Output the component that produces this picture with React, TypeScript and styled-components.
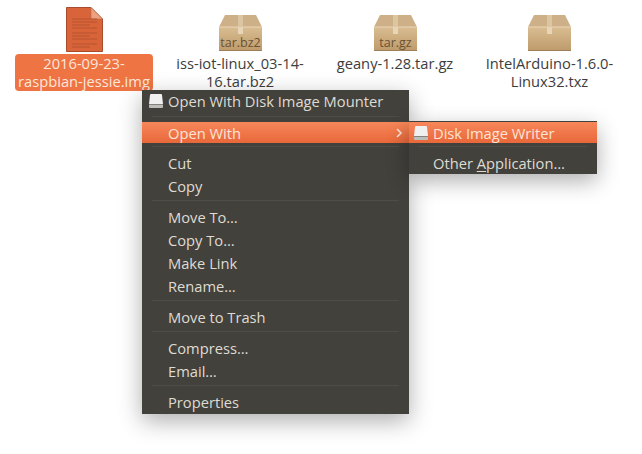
import styled, { createGlobalStyle } from 'styled-components';

const GlobalStyle = createGlobalStyle`
  html, body {
    margin: 0;
    background: #fff;
  }
  body {
    font-family: 'Open Sans', 'Noto Sans', sans-serif;
  }
`;

const Desktop = styled.div`
  position: relative;
  width: 642px;
  height: 454px;
  overflow: hidden;
  background: #fff;
`;

const FileGrid = styled.div`
  display: grid;
  grid-template-columns: 156px 156px 154px 155px;
  padding: 6px 0 0 6px;
`;

const FileCell = styled.div`
  display: flex;
  flex-direction: column;
  align-items: center;
`;

const IconSlot = styled.div`
  display: flex;
  align-items: flex-end;
  justify-content: center;
  height: 46px;
  margin-bottom: 2px;
`;

const FileLabel = styled.div<{ $selected?: boolean }>`
  padding: 0 3px 1px;
  border-radius: 4px;
  background: ${(p) => (p.$selected ? '#ef7443' : 'transparent')};
  color: ${(p) => (p.$selected ? '#fde6da' : '#3d3d3d')};
  font-size: 14.7px;
  line-height: 18px;
  text-align: center;
  white-space: pre;
`;

const Menu = styled.div<{ $top: number; $left: number; $width: number; $pad?: number }>`
  position: absolute;
  top: ${(p) => p.$top}px;
  left: ${(p) => p.$left}px;
  display: flex;
  flex-direction: column;
  width: ${(p) => p.$width}px;
  padding-bottom: ${(p) => p.$pad ?? 0}px;
  background: #43413c;
  box-shadow: 0 7px 22px rgba(0, 0, 0, 0.32);
`;

const MenuRow = styled.div<{ $active?: boolean; $indent: number; $first?: boolean }>`
  position: relative;
  display: flex;
  align-items: center;
  height: ${(p) => (p.$active ? 21 : p.$first ? 22 : 23)}px;
  margin-top: ${(p) => (p.$active ? 1 : 0)}px;
  margin-bottom: ${(p) => (p.$first ? 1 : 0)}px;
  padding-left: ${(p) => p.$indent}px;
  background: ${(p) =>
    p.$active ? 'linear-gradient(#f7875a, #e8683a)' : 'transparent'};
  color: ${(p) => (p.$active ? '#fde3d5' : '#dfdbd2')};
  font-size: 14.7px;
  white-space: nowrap;
`;

const RowIcon = styled.span`
  display: flex;
  width: 20px;
  margin-left: -20px;
`;

const Chevron = styled.svg`
  position: absolute;
  right: 5px;
  top: 6px;
`;

const Divider = styled.div`
  height: 1px;
  margin: 3px 10px 4px;
  background: #4f4d48;
`;

const Mnemonic = styled.span`
  text-decoration: underline;
  text-underline-offset: 2px;
`;

const DocumentIcon = () => (
  <svg width="37" height="45" viewBox="0 0 37 45">
    <path d="M0.5 0.5H25L36.5 12V44.5H0.5Z" fill="#d9643a" stroke="#a84c2e" />
    <path d="M25 0.5V12H36.5Z" fill="#eda27f" stroke="#b9694a" strokeWidth="0.6" />
    {[12, 15, 18, 21, 26, 29, 32, 37, 40].map((y, i) => (
      <line
        key={y}
        x1="6"
        x2={i % 3 === 2 ? 24 : 31}
        y1={y}
        y2={y}
        stroke="#a84c2c"
        strokeWidth="1"
        opacity="0.75"
      />
    ))}
  </svg>
);

const ArchiveIcon = ({ tag }: { tag?: string }) => (
  <svg width="43" height="38" viewBox="0 0 43 38">
    <defs>
      <linearGradient id="boxFace" x1="0" x2="0" y1="0" y2="1">
        <stop offset="0" stopColor="#d9bd92" />
        <stop offset="1" stopColor="#bd9a6b" />
      </linearGradient>
    </defs>
    <path d="M6 1H37L43 13H0Z" fill="#cdb088" />
    <path d="M0 13H43V36Q43 37 42 37H1Q0 37 0 36Z" fill="url(#boxFace)" />
    <path d="M0 13H43" stroke="#e8d6b8" />
    <rect x="19" y="1" width="5" height="12" fill="#dcc6a2" />
    <rect x="19" y="13" width="5" height="7" fill="#e6d5b6" />
    <path d="M0 36.5H43" stroke="#a08059" />
    {tag && (
      <text
        x="21.5"
        y="33"
        textAnchor="middle"
        fontFamily="'Open Sans', sans-serif"
        fontSize="12.5"
        fill="#6b5233"
      >
        {tag}
      </text>
    )}
  </svg>
);

const DiskIcon = () => (
  <svg width="16" height="16" viewBox="0 0 16 16">
    <path d="M3 1H13Q14 1 14 2L15 11H1L2 2Q2 1 3 1Z" fill="#f0f0f0" />
    <path d="M1 11H15V14Q15 15 14 15H2Q1 15 1 14Z" fill="#bdbdba" />
    <path d="M1 11.5H15" stroke="#85837d" />
  </svg>
);

const files = [
  { name: '2016-09-23-\nraspbian-jessie.img', selected: true },
  { name: 'iss-iot-linux_03-14-\n16.tar.bz2', tag: 'tar.bz2' },
  { name: 'geany-1.28.tar.gz', tag: 'tar.gz' },
  { name: 'IntelArduino-1.6.0-\nLinux32.txz' },
];

const menuGroups = [
  ['Cut', 'Copy'],
  ['Move To…', 'Copy To…', 'Make Link', 'Rename…'],
  ['Move to Trash'],
  ['Compress…', 'Email…'],
  ['Properties'],
];

export default function App() {
  return (
    <Desktop>
      <GlobalStyle />
      <FileGrid>
        {files.map((file) => (
          <FileCell key={file.name}>
            <IconSlot>
              {file.selected ? <DocumentIcon /> : <ArchiveIcon tag={file.tag} />}
            </IconSlot>
            <FileLabel $selected={file.selected}>{file.name}</FileLabel>
          </FileCell>
        ))}
      </FileGrid>

      <Menu $top={90} $left={142} $width={267} $pad={1}>
        <MenuRow $indent={26} $first>
          <RowIcon>
            <DiskIcon />
          </RowIcon>
          Open With Disk Image Mounter
        </MenuRow>
        <Divider />
        <MenuRow $indent={26} $active>
          Open With
          <Chevron width="10" height="10" viewBox="0 0 10 10">
            <path d="M3 1L7 5L3 9" fill="none" stroke="#fde3d5" strokeWidth="1.6" />
          </Chevron>
        </MenuRow>
        {menuGroups.map((group) => (
          <div key={group[0]}>
            <Divider />
            {group.map((label) => (
              <MenuRow key={label} $indent={26}>
                {label}
              </MenuRow>
            ))}
          </div>
        ))}
      </Menu>

      <Menu $top={121} $left={409} $width={188}>
        <MenuRow $indent={24} $active>
          <RowIcon>
            <DiskIcon />
          </RowIcon>
          Disk Image Writer
        </MenuRow>
        <Divider />
        <MenuRow $indent={24}>
          <span>
            Other <Mnemonic>A</Mnemonic>pplication…
          </span>
        </MenuRow>
      </Menu>
    </Desktop>
  );
}
